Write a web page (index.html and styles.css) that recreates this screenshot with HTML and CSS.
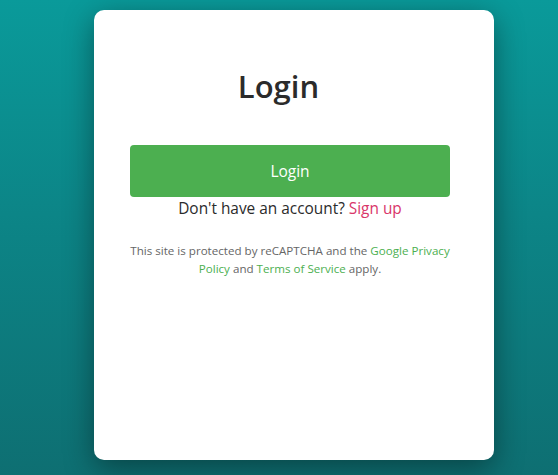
FILE: index.html
```html
<!DOCTYPE html>
<html lang="en">
<head>
<meta charset="utf-8">
<title>Login</title>
<link rel="stylesheet" href="styles.css">
</head>
<body>
  <main class="card">
    <h1 class="title">Login</h1>
    <button class="login-btn" type="button">Login</button>
    <p class="signup">Don't have an account? <a href="#" class="signup-link">Sign up</a></p>
    <p class="recaptcha">This site is protected by reCAPTCHA and the <a href="#" class="green">Google Privacy Policy</a> and <a href="#" class="green">Terms of Service</a> apply.</p>
  </main>
</body>
</html>
```
FILE: styles.css
```css
html, body {
  margin: 0;
  height: 100%;
}
body {
  background: linear-gradient(180deg, #0a9a9a 0%, #0c8587 45%, #0e6f72 100%);
  font-family: "Open Sans", "Noto Sans", sans-serif;
  padding-top: 10px;
  box-sizing: border-box;
  overflow: hidden;
}
.card {
  margin-left: 94px;
  width: 400px;
  height: 450px;
  box-sizing: border-box;
  padding: 36px 44px 0 36px;
  background: #fff;
  border-radius: 10px;
  box-shadow: 0 8px 30px rgba(0, 0, 0, 0.4);
  display: flex;
  flex-direction: column;
}
.title {
  margin: 20px 23px 39px 0;
  font-size: 31px;
  line-height: 40px;
  font-weight: 600;
  color: #2b2b2b;
  text-align: center;
}
.login-btn {
  height: 52px;
  width: 100%;
  border: none;
  border-radius: 4px;
  background: #4caf50;
  color: #fff;
  font-family: inherit;
  font-size: 15.5px;
  cursor: pointer;
}
.signup {
  margin: 0;
  font-size: 15.4px;
  line-height: 24px;
  color: #2b2b2b;
  text-align: center;
}
.signup-link {
  color: #d9366a;
  text-decoration: none;
}
.recaptcha {
  margin: 21px -5px 0;
  font-size: 11.6px;
  line-height: 18px;
  color: #666;
  text-align: center;
}
.green {
  color: #4caf50;
  text-decoration: none;
}
```
